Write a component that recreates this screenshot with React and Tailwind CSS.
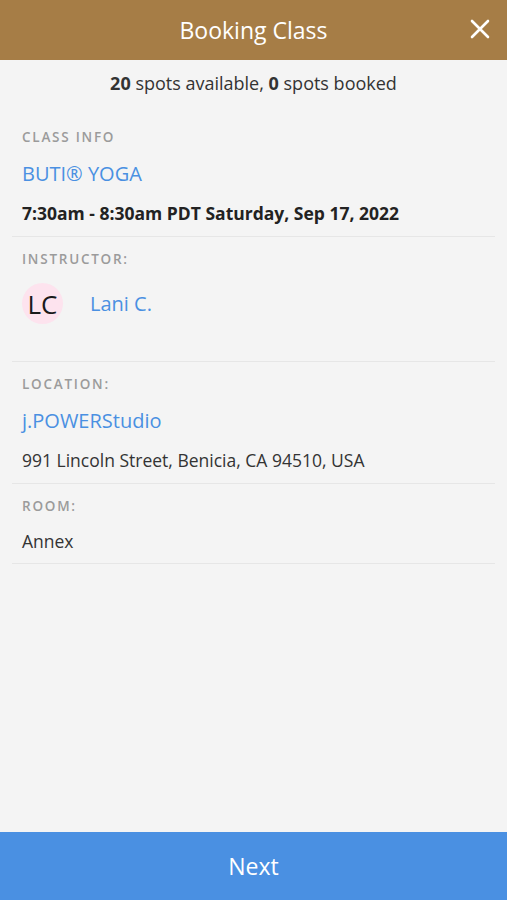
export default function App() {
  const label = "text-[13.5px] leading-[20px] tracking-[0.13em] text-[#9b9b9b] font-semibold";
  return (
    <div className="h-[900px] w-full flex flex-col bg-[#f4f4f4] text-[#333]" style={{ fontFamily: '"Open Sans", "Noto Sans", sans-serif' }}>
      <div className="h-[60px] bg-[#a67d46] flex items-center justify-center relative shrink-0">
        <span className="text-white text-[23px] leading-[30px]">Booking Class</span>
        <svg className="absolute right-[17px] top-[19px]" width="20" height="20" viewBox="0 0 20 20">
          <path d="M2 2 L18 18 M18 2 L2 18" stroke="white" strokeWidth="2.6" strokeLinecap="round" />
        </svg>
      </div>
      <div className="flex-1">
        <div className="pt-[11px] pb-[20px] text-center text-[18px] leading-[24px] text-[#333]">
          <b className="font-bold">20</b> spots available, <b className="font-bold">0</b> spots booked
        </div>
        <div className="mx-3 border-b border-[#e6e6e6] px-[10px] pt-[12px] pb-[11px]">
          <div className={label}>CLASS INFO</div>
          <div className="mt-[14px] text-[20px] leading-[26px] text-[#4a90e2]">BUTI® YOGA</div>
          <div className="mt-[14px] text-[17.5px] leading-[24px] font-bold text-[#222]">7:30am - 8:30am PDT Saturday, Sep 17, 2022</div>
        </div>
        <div className="mx-3 border-b border-[#e6e6e6] px-[10px] pt-[12px] pb-[37px]">
          <div className={label}>INSTRUCTOR:</div>
          <div className="mt-[14px] flex items-center">
            <div className="w-[41px] h-[41px] rounded-full bg-[#fde3ee] flex items-center justify-center text-[26px] text-[#1a1a1a] leading-none">LC</div>
            <span className="ml-[27px] text-[20px] leading-[26px] text-[#4a90e2]">Lani C.</span>
          </div>
        </div>
        <div className="mx-3 border-b border-[#e6e6e6] px-[10px] pt-[12px] pb-[11px]">
          <div className={label}>LOCATION:</div>
          <div className="mt-[14px] text-[20px] leading-[26px] text-[#4a90e2]">j.POWERStudio</div>
          <div className="mt-[14px] text-[17.5px] leading-[24px] text-[#333]">991 Lincoln Street, Benicia, CA 94510, USA</div>
        </div>
        <div className="mx-3 border-b border-[#e6e6e6] px-[10px] pt-[12px] pb-[10px]">
          <div className={label}>ROOM:</div>
          <div className="mt-[13px] text-[17.5px] leading-[24px] text-[#333]">Annex</div>
        </div>
      </div>
      <div className="h-[68px] shrink-0 bg-[#4a90e2] flex items-center justify-center">
        <span className="text-white text-[23px] leading-[30px]">Next</span>
      </div>
    </div>
  );
}
